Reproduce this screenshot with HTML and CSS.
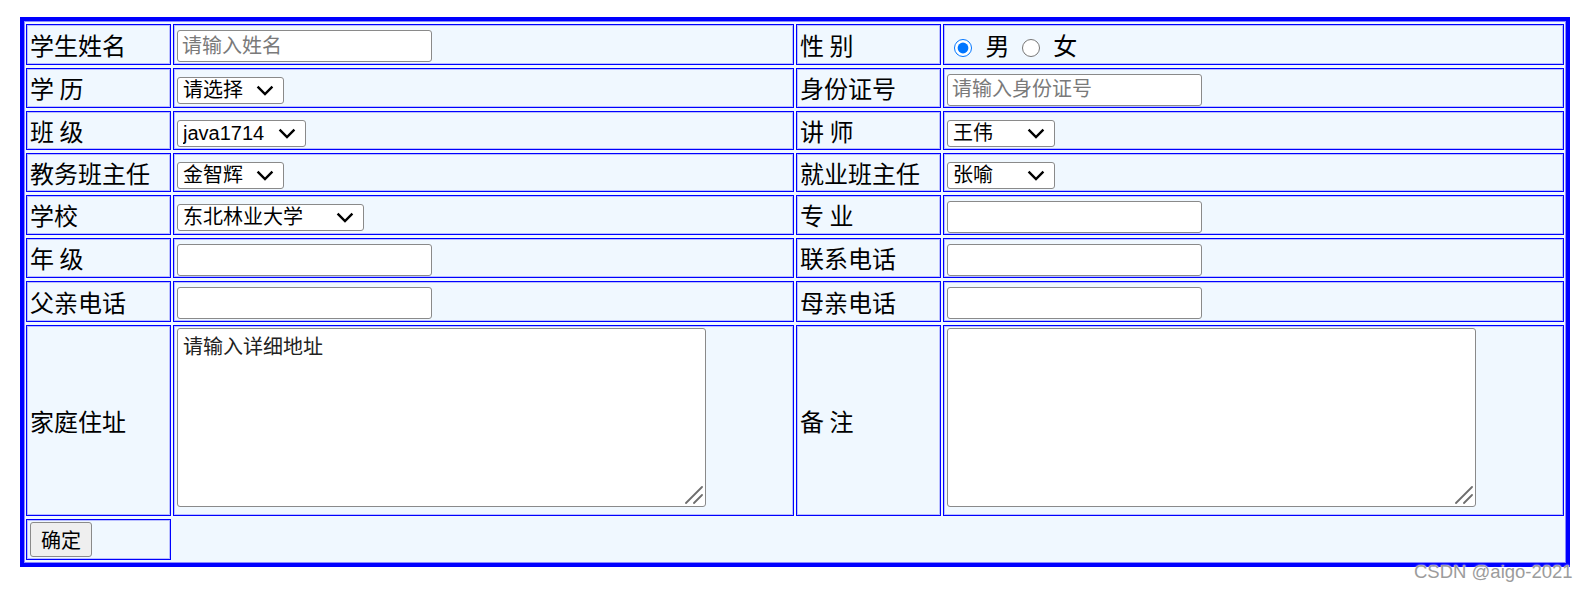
FILE: index.html
```html
<!DOCTYPE html>
<html lang="zh-CN">
<head>
<meta charset="utf-8">
<title>学生信息</title>
<link rel="stylesheet" href="styles.css">
</head>
<body>
<div class="page">
<form class="reg">
<table class="grid">
<colgroup><col class="c-label"><col class="c-field"><col class="c-label"><col class="c-field"></colgroup>
<tr class="h41">
  <td class="lbl">学生姓名</td>
  <td><input class="txt" type="text" placeholder="请输入姓名"></td>
  <td class="lbl">性 别</td>
  <td class="radios"><input class="rd" type="radio" name="sex" checked> 男 <input class="rd" type="radio" name="sex"> 女</td>
</tr>
<tr class="h40">
  <td class="lbl">学 历</td>
  <td><span class="sel w107"><select><option>请选择</option><option>本科</option><option>专科</option></select><svg class="chev" width="18" height="11" viewBox="0 0 18 11"><path d="M1.6 1.6 L9 9 L16.4 1.6" fill="none" stroke="#000" stroke-width="2.4"/></svg></span></td>
  <td class="lbl">身份证号</td>
  <td><input class="txt" type="text" placeholder="请输入身份证号"></td>
</tr>
<tr class="h39">
  <td class="lbl">班 级</td>
  <td><span class="sel w128"><select><option>java1714</option></select><svg class="chev" width="18" height="11" viewBox="0 0 18 11"><path d="M1.6 1.6 L9 9 L16.4 1.6" fill="none" stroke="#000" stroke-width="2.4"/></svg></span></td>
  <td class="lbl">讲 师</td>
  <td><span class="sel w108"><select><option>王伟</option></select><svg class="chev" width="18" height="11" viewBox="0 0 18 11"><path d="M1.6 1.6 L9 9 L16.4 1.6" fill="none" stroke="#000" stroke-width="2.4"/></svg></span></td>
</tr>
<tr class="h39">
  <td class="lbl">教务班主任</td>
  <td><span class="sel w107"><select><option>金智辉</option></select><svg class="chev" width="18" height="11" viewBox="0 0 18 11"><path d="M1.6 1.6 L9 9 L16.4 1.6" fill="none" stroke="#000" stroke-width="2.4"/></svg></span></td>
  <td class="lbl">就业班主任</td>
  <td><span class="sel w108"><select><option>张喻</option></select><svg class="chev" width="18" height="11" viewBox="0 0 18 11"><path d="M1.6 1.6 L9 9 L16.4 1.6" fill="none" stroke="#000" stroke-width="2.4"/></svg></span></td>
</tr>
<tr class="h40">
  <td class="lbl">学校</td>
  <td><span class="sel w187"><select><option>东北林业大学</option></select><svg class="chev" width="18" height="11" viewBox="0 0 18 11"><path d="M1.6 1.6 L9 9 L16.4 1.6" fill="none" stroke="#000" stroke-width="2.4"/></svg></span></td>
  <td class="lbl">专 业</td>
  <td><input class="txt" type="text"></td>
</tr>
<tr class="h40">
  <td class="lbl">年 级</td>
  <td><input class="txt" type="text"></td>
  <td class="lbl">联系电话</td>
  <td><input class="txt" type="text"></td>
</tr>
<tr class="h41">
  <td class="lbl">父亲电话</td>
  <td><input class="txt" type="text"></td>
  <td class="lbl">母亲电话</td>
  <td><input class="txt" type="text"></td>
</tr>
<tr class="h191">
  <td class="lbl">家庭住址</td>
  <td class="top"><span class="ta"><textarea class="area">请输入详细地址</textarea><svg class="grip" width="18" height="18" viewBox="0 0 18 18"><path d="M17 1 L1 17 M17 9 L9 17" fill="none" stroke="#6e6e6e" stroke-width="1.8" stroke-linecap="round"/></svg></span></td>
  <td class="lbl">备 注</td>
  <td class="top"><span class="ta"><textarea class="area"></textarea><svg class="grip" width="18" height="18" viewBox="0 0 18 18"><path d="M17 1 L1 17 M17 9 L9 17" fill="none" stroke="#6e6e6e" stroke-width="1.8" stroke-linecap="round"/></svg></span></td>
</tr>
<tr class="h41">
  <td><button class="btn" type="submit">确定</button></td>
</tr>
</table>
</form>
</div>
<div class="mark">CSDN @aigo-2021</div>
</body>
</html>
```

FILE: styles.css
```css
html, body {
  margin: 0;
  padding: 0;
  background: #ffffff;
}

body {
  font-family: "Noto Sans CJK SC", sans-serif;
  color: #000;
  position: relative;
  min-height: 591px;
}

.page {
  padding: 17px 0 0 20px;
}

.reg {
  margin: 0;
}

.grid {
  width: 1550px;
  box-sizing: border-box;
  table-layout: fixed;
  border: 4px solid #0000ff;
  border-spacing: 2px 3px;
  background: #f0f8ff;
  box-shadow: inset 0 0 0 1px #8a8aff;
}

.c-label { width: 145px; }
.c-field { width: 621px; }

.grid td {
  border: 1px solid #0000ff;
  box-shadow: inset 0 0 0 1px rgba(80, 80, 255, 0.35);
  padding: 0 3px;
  background: #f0f8ff;
  font-size: 24px;
  line-height: 1.3;
  vertical-align: middle;
  white-space: nowrap;
}

.grid td.top {
  vertical-align: top;
  padding-top: 2px;
}

.h39 { height: 39px; }
.h40 { height: 40px; }
.h41 { height: 41px; }
.h191 { height: 191px; }

.lbl {
  letter-spacing: 0;
}

.txt {
  display: block;
  margin: 3px 0 0 0;
  box-sizing: border-box;
  width: 255px;
  height: 32px;
  padding: 0 4px;
  border: 1px solid #8a8a8a;
  border-radius: 3px;
  background: #fff;
  font-family: "Liberation Sans", "Noto Sans CJK SC", sans-serif;
  font-size: 20px;
  color: #000;
  outline: none;
}

.txt::placeholder {
  color: #7a7a7a;
  opacity: 1;
}

.sel {
  display: block;
  position: relative;
  margin-top: 5px;
}

.sel select {
  display: block;
  box-sizing: border-box;
  height: 27px;
  width: 100%;
  margin: 0;
  padding: 0 30px 0 5px;
  border: 1px solid #8a8a8a;
  border-radius: 3px;
  background: #fff;
  -webkit-appearance: none;
  appearance: none;
  font-family: "Liberation Sans", "Noto Sans CJK SC", sans-serif;
  font-size: 20px;
  line-height: 25px;
  color: #000;
}

.w107 { width: 107px; }
.w108 { width: 108px; }
.w128 { width: 129px; }
.w187 { width: 187px; }

.chev {
  position: absolute;
  right: 10px;
  top: 8px;
  pointer-events: none;
}

.radios {
  font-size: 24px;
}

.rd {
  width: 18px;
  height: 18px;
  margin: 0 8px 0 7px;
  vertical-align: -2px;
}

.ta {
  display: block;
  position: relative;
  width: 529px;
}

.area {
  display: block;
  box-sizing: border-box;
  width: 529px;
  height: 179px;
  margin: 0;
  padding: 2px 5px;
  border: 1px solid #8a8a8a;
  border-radius: 3px;
  background: #fff;
  font-family: "Noto Sans CJK SC", monospace;
  font-size: 20px;
  line-height: 1.45;
  color: #222;
  resize: none;
}

.grip {
  position: absolute;
  right: 3px;
  bottom: 3px;
  pointer-events: none;
}

.btn {
  display: block;
  box-sizing: border-box;
  height: 35px;
  margin: 0;
  padding: 0 10px;
  border: 1px solid #8a8a8a;
  border-radius: 3px;
  background: #efefef;
  font-family: "Noto Sans CJK SC", sans-serif;
  font-size: 20px;
  line-height: 1;
  color: #000;
}

.mark {
  position: absolute;
  left: 1414px;
  top: 561px;
  font-family: "Liberation Sans", sans-serif;
  font-size: 18.5px;
  color: #9c9c9c;
  text-shadow: 0 0 1px #fff, 0 0 2px #fff;
  white-space: nowrap;
}
```
